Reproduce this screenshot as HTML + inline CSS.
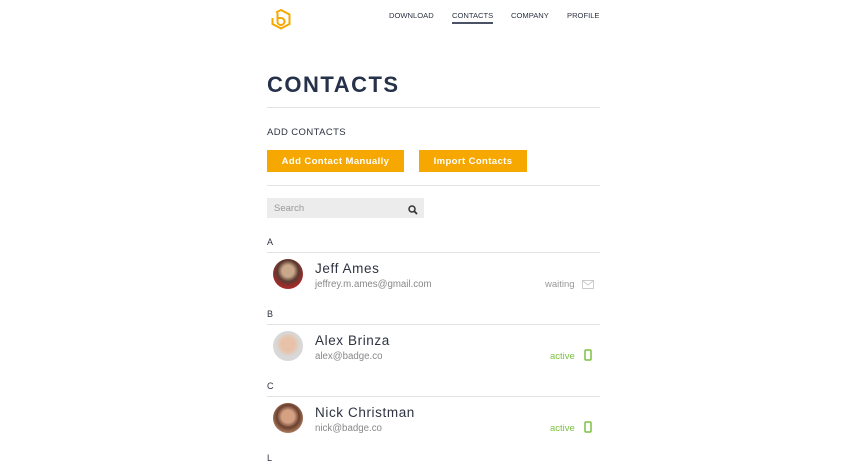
<!DOCTYPE html>
<html><head><style>
*{margin:0;padding:0;box-sizing:border-box}
body{width:866px;height:468px;overflow:hidden;background:#fff;font-family:"Liberation Sans",sans-serif;color:#2d3340;position:relative}
.a{position:absolute}
.nav{font-size:7.6px;color:#2d3340;top:11px;letter-spacing:0}
.hr{position:absolute;left:267px;width:333px;height:1px;background:#e3e3e3}
.btn{position:absolute;top:150px;height:22px;background:#f6a800;color:#fff;font-weight:bold;font-size:9.5px;text-align:center;line-height:23px;letter-spacing:.4px}
.letter{position:absolute;left:267px;font-size:9px;color:#2d3340}
.av{position:absolute;left:273px;width:30px;height:30px;border-radius:50%}
.name{position:absolute;left:315px;font-size:13.5px;color:#2d3340;letter-spacing:.6px}
.mail{position:absolute;left:315px;font-size:9.7px;color:#888}
.st{position:absolute;font-size:9.5px}
</style></head><body>
<svg class="a" style="left:269px;top:8px" width="24" height="24" viewBox="269 8 24 24"><path d="M276 12.5 L281 10 L289.5 14.5 V24 L281 28.5 L272.5 24 V18" fill="none" stroke="#f6a800" stroke-width="2"/><path d="M277.5 13 V22 A3.5 3.5 0 0 0 281 25 A3.5 3.5 0 0 0 284.5 21.5 A3.5 3.5 0 0 0 281 18 H277.5" fill="none" stroke="#f6a800" stroke-width="2"/></svg>
<div class="a nav" style="left:389px">DOWNLOAD</div>
<div class="a nav" style="left:452px">CONTACTS</div>
<div class="a" style="left:452px;top:22px;width:41px;height:2px;background:#4a5366"></div>
<div class="a nav" style="left:511px">COMPANY</div>
<div class="a nav" style="left:567px">PROFILE</div>
<div class="a" style="left:267px;top:72px;font-size:22px;font-weight:bold;letter-spacing:1.5px;color:#26324a">CONTACTS</div>
<div class="hr" style="top:107px"></div>
<div class="a" style="left:267px;top:127px;font-size:9.5px;letter-spacing:.4px">ADD CONTACTS</div>
<div class="btn" style="left:267px;width:137px">Add Contact Manually</div>
<div class="btn" style="left:419px;width:108px">Import Contacts</div>
<div class="hr" style="top:185px"></div>
<div class="a" style="left:267px;top:198px;width:157px;height:20px;background:#ececec"></div>
<div class="a" style="left:274px;top:203px;font-size:9.5px;color:#999">Search</div>
<svg class="a" style="left:408px;top:205px" width="10" height="10" viewBox="0 0 10 10"><circle cx="4" cy="4" r="3" fill="none" stroke="#333" stroke-width="1.5"/><path d="M6 6 L9 9" stroke="#333" stroke-width="1.8"/></svg>

<div class="letter" style="top:237px">A</div>
<div class="hr" style="top:252px"></div>
<div class="av" style="top:259px;background:radial-gradient(circle at 50% 40%,#c9a78a 25%,#5a3a30 45%,#a52a2a 70%)"></div>
<div class="name" style="top:261px">Jeff Ames</div>
<div class="mail" style="top:279px">jeffrey.m.ames@gmail.com</div>
<div class="st" style="top:279px;left:545px;color:#999">waiting</div>
<svg class="a" style="left:582px;top:280px" width="12" height="9"><rect x=".5" y=".5" width="11" height="8" fill="none" stroke="#ccc"/><path d="M.5 .5 L6 5 L11.5 .5" fill="none" stroke="#ccc"/></svg>

<div class="letter" style="top:309px">B</div>
<div class="hr" style="top:324px"></div>
<div class="av" style="top:331px;background:radial-gradient(circle at 50% 45%,#e8c2a8 30%,#d8d8d8 55%)"></div>
<div class="name" style="top:333px">Alex Brinza</div>
<div class="mail" style="top:351px">alex@badge.co</div>
<div class="st" style="top:351px;left:550px;color:#7cc242">active</div>
<svg class="a" style="left:584px;top:349px" width="8" height="12"><rect x="1" y="1" width="6" height="10" rx="1" fill="none" stroke="#7cc242" stroke-width="1.5"/></svg>

<div class="letter" style="top:381px">C</div>
<div class="hr" style="top:396px"></div>
<div class="av" style="top:403px;background:radial-gradient(circle at 50% 45%,#d4a283 28%,#6b4030 50%,#b08060 75%)"></div>
<div class="name" style="top:405px">Nick Christman</div>
<div class="mail" style="top:423px">nick@badge.co</div>
<div class="st" style="top:423px;left:550px;color:#7cc242">active</div>
<svg class="a" style="left:584px;top:421px" width="8" height="12"><rect x="1" y="1" width="6" height="10" rx="1" fill="none" stroke="#7cc242" stroke-width="1.5"/></svg>

<div class="letter" style="top:453px">L</div>
</body></html>
